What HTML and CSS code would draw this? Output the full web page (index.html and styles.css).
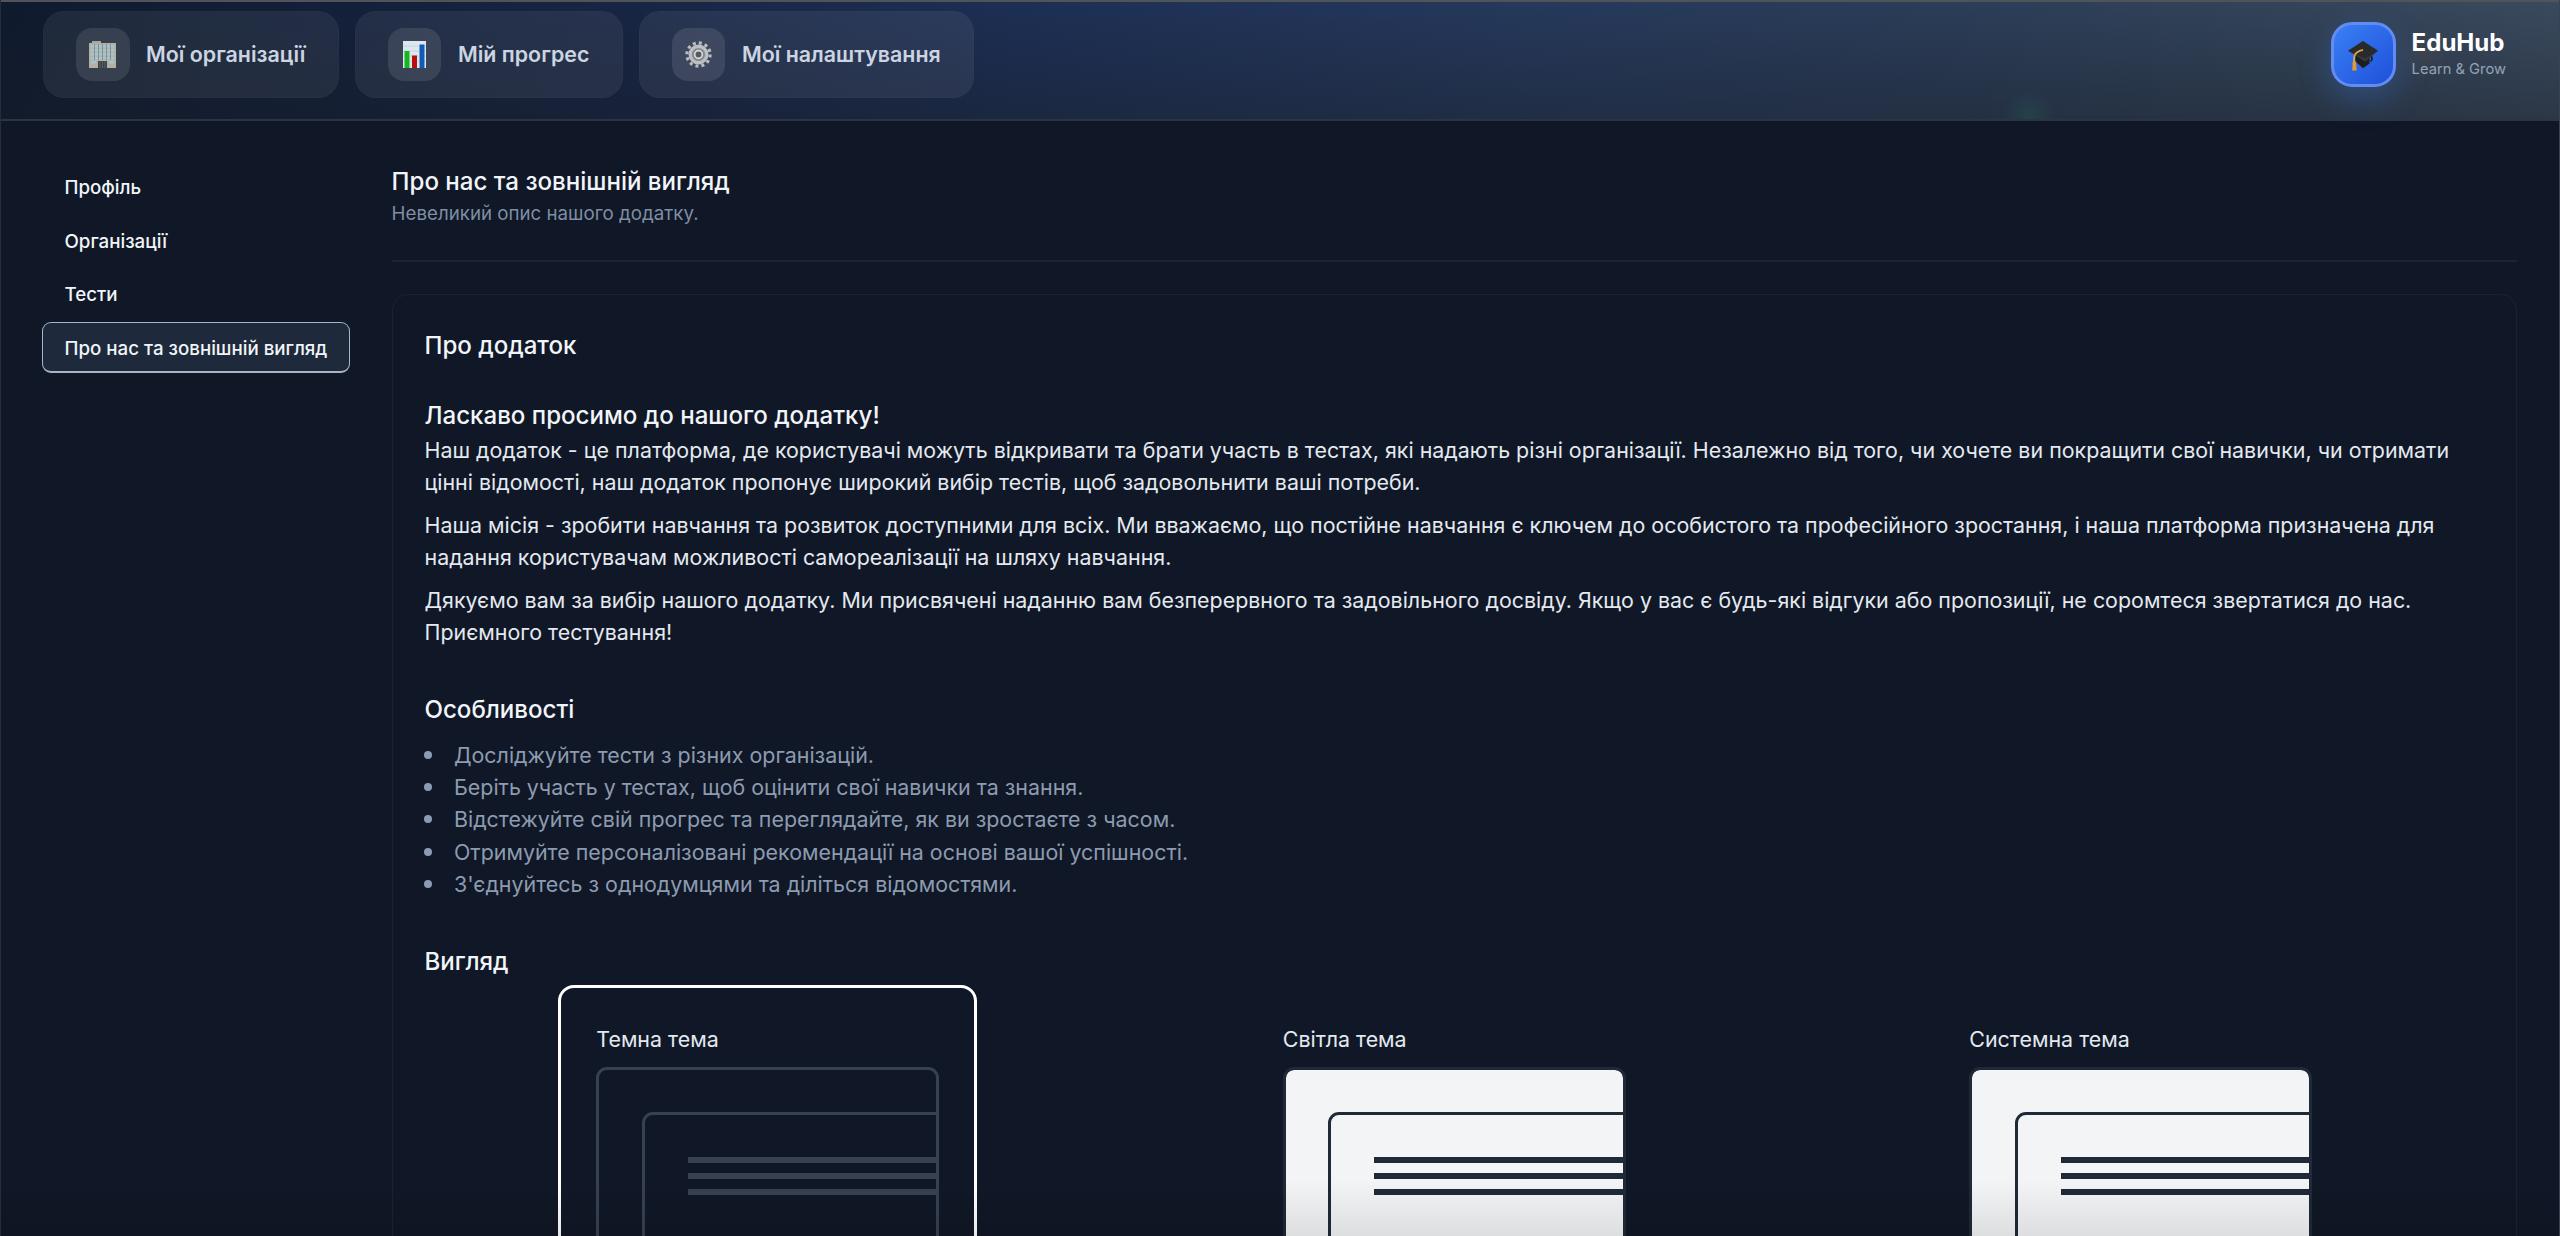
FILE: index.html
```html
<!DOCTYPE html>
<html lang="uk">
<head>
<meta charset="utf-8">
<title>EduHub</title>
<link rel="stylesheet" href="styles.css">
</head>
<body>
<div class="app">
  <header class="topbar">
    <nav class="nav">
      <a class="nav-item"><span class="nav-icon">
        <svg viewBox="0 0 27 27"><path d="M3 0h9v3H3z" fill="#aaa69f"/><path d="M0 2h27v25h-9v-7H9v7H0z" fill="#b5b0a6"/><g fill="#a3c6d2"><path d="M2 4h23v2.600H2zM2 8h23v2.600H2zM2 12h23v2.600H2zM2 16h23v2.600H2zM2 20h5v2.600H2zM20 20h5v2.600h-5z"/></g><path d="M5.500 3v16M9.500 3v16M13.500 3v16M17.500 3v16M21.500 3v16" stroke="#7d8b8e" stroke-width=".9"/><path d="M9 20h9v7H9z" fill="#39424a"/><path d="M11 20v7M13.500 20v7M16 20v7" stroke="#64716a" stroke-width=".7"/></svg>
      </span>Мої організації</a>
      <a class="nav-item"><span class="nav-icon">
        <svg viewBox="0 0 27 27"><path d="M2 0h23v27H2z" fill="#dde7f0"/><path d="M2 5h23M2 10h23M2 15h23M2 20h23" stroke="#c2d0dd" stroke-width=".8"/><path d="M3.500 10h5v17h-5z" fill="#12b81c"/><path d="M11 14.500h5V27h-5z" fill="#b90d10"/><path d="M18.500 3.500h5V27h-5z" fill="#0f5bb5"/></svg>
      </span>Мій прогрес</a>
      <a class="nav-item"><span class="nav-icon">
        <svg viewBox="0 0 27 27"><circle cx="13.500" cy="13.500" r="11.600" fill="none" stroke="#b9bdc1" stroke-width="3.200" stroke-dasharray="3 3.070"/><circle cx="13.500" cy="13.500" r="8.300" fill="#85888b" stroke="#bdc0c3" stroke-width="3.400"/><circle cx="13.500" cy="13.500" r="3.800" fill="#55595e" stroke="#d8dadc" stroke-width="1.700"/></svg>
      </span>Мої налаштування</a>
    </nav>
    <div class="brand">
      <div class="logo">
        <svg viewBox="0 0 34 34"><path d="M9 15v9l8 7 7-5v-9z" fill="#1d1e20"/><path d="M24 18c3 0 3.500 4 1 6" fill="none" stroke="#222" stroke-width="2"/><path d="M1 12.500 17 2l16 10.500L19.500 23z" fill="#292a2c"/><path d="M1 12.500 19.500 21 33 12.500 19.500 24z" fill="#3c3b3b"/><path d="M17 11.500c-5 1-9 4-9.500 8v5" fill="none" stroke="#dda245" stroke-width="2"/><path d="M6 24h3.600l.6 9.500H5.600z" fill="#e39a2d"/></svg>
      </div>
      <div class="brand-text"><span class="brand-name">EduHub</span><span class="brand-tag">Learn &amp; Grow</span></div>
    </div>
  </header>
  <div class="layout">
    <aside class="sidebar">
      <a class="side-item">Профіль</a>
      <a class="side-item">Організації</a>
      <a class="side-item">Тести</a>
      <a class="side-item active">Про нас та зовнішній вигляд</a>
    </aside>
    <main class="main">
      <h1 class="title">Про нас та зовнішній вигляд</h1>
      <p class="subtitle">Невеликий опис нашого додатку.</p>
      <hr class="divider">
      <section class="card">
        <h2 class="heading">Про додаток</h2>
        <h3 class="heading welcome">Ласкаво просимо до нашого додатку!</h3>
        <p class="text">Наш додаток - це платформа, де користувачі можуть відкривати та брати участь в тестах, які надають різні організації. Незалежно від того, чи хочете ви покращити свої навички, чи отримати цінні відомості, наш додаток пропонує широкий вибір тестів, щоб задовольнити ваші потреби.</p>
        <p class="text">Наша місія - зробити навчання та розвиток доступними для всіх. Ми вважаємо, що постійне навчання є ключем до особистого та професійного зростання, і наша платформа призначена для надання користувачам можливості самореалізації на шляху навчання.</p>
        <p class="text">Дякуємо вам за вибір нашого додатку. Ми присвячені наданню вам безперервного та задовільного досвіду. Якщо у вас є будь-які відгуки або пропозиції, не соромтеся звертатися до нас. Приємного тестування!</p>
        <h3 class="heading section">Особливості</h3>
        <ul class="features">
          <li>Досліджуйте тести з різних організацій.</li>
          <li>Беріть участь у тестах, щоб оцінити свої навички та знання.</li>
          <li>Відстежуйте свій прогрес та переглядайте, як ви зростаєте з часом.</li>
          <li>Отримуйте персоналізовані рекомендації на основі вашої успішності.</li>
          <li>З'єднуйтесь з однодумцями та діліться відомостями.</li>
        </ul>
        <h3 class="heading section">Вигляд</h3>
        <div class="themes">
          <div class="theme dark selected"><span class="theme-name">Темна тема</span><div class="preview"><div class="window"><i></i><i></i><i></i></div></div></div>
          <div class="theme light"><span class="theme-name">Світла тема</span><div class="preview"><div class="window"><i></i><i></i><i></i></div></div></div>
          <div class="theme light"><span class="theme-name">Системна тема</span><div class="preview"><div class="window"><i></i><i></i><i></i></div></div></div>
        </div>
      </section>
    </main>
  </div>
  <div class="fade"></div>
</div>
</body>
</html>
```
FILE: styles.css
```css
* { box-sizing: border-box; margin: 0; padding: 0; }
body { background: #101726; }
.app {
  position: relative;
  height: 1236px;
  overflow: hidden;
  background: #101726;
  color: #f1f5f9;
  font: 400 21.410px/32.150px Inter, "Noto Sans", sans-serif;
  border-left: 1px solid #252d3b;
  border-right: 1px solid #394252;
}
.topbar {
  height: 121px;
  padding: 9px 53px 0 42px;
  display: flex;
  justify-content: space-between;
  align-items: flex-start;
  border-top: 2px solid #505459;
  border-bottom: 2px solid #2b3442;
  background:
    radial-gradient(circle at 2028px 115px, rgba(34, 120, 90, .24), transparent 26px),
    radial-gradient(circle at 2422px 52px, rgba(110, 80, 60, .22), transparent 26px),
    linear-gradient(180deg, rgba(24, 29, 38, 0) 0%, rgba(24, 29, 38, .42) 100%),
    linear-gradient(90deg, #0f1a2e 0%, #172544 24%, #1d2f55 40%, #26395c 60%, #2b3d58 76%, #324359 88%, #3a4a5e 100%);
}
.nav { display: flex; gap: 16px; }
.nav-item {
  height: 87px;
  padding: 0 32.500px 0 32px;
  display: flex;
  align-items: center;
  gap: 16.500px;
  border: 1px solid rgba(255, 255, 255, .02);
  border-radius: 21px;
  background: rgba(255, 255, 255, .065);
  color: #cbd5e1;
  font-weight: 600;
}
.nav-icon {
  width: 53.500px;
  height: 53.500px;
  display: grid;
  place-items: center;
  border-radius: 16px;
  background: rgba(255, 255, 255, .1);
}
.nav-icon svg { width: 27px; height: 27px; }
.brand { display: flex; gap: 16px; padding-top: 11px; }
.logo {
  width: 65px;
  height: 65px;
  display: grid;
  place-items: center;
  border: 3px solid #628cf2;
  border-radius: 21px;
  background: linear-gradient(135deg, #3b82f6, #1d4ed8) border-box;
  box-shadow: 0 11px 32px rgba(59, 130, 246, .3);
}
.logo svg { width: 32px; height: 32px; }
.brand-text { display: flex; flex-direction: column; padding-top: 6px; }
.brand-name { font-size: 24.080px; line-height: 30px; font-weight: 700; color: #fff; }
.brand-tag { font-size: 14.720px; line-height: 22px; color: #94a3b8; }
.layout { display: flex; padding: 40px 42px 0 41px; }
.sidebar {
  width: 308px;
  margin-right: 41.600px;
  display: flex;
  flex-direction: column;
  gap: 2.700px;
  flex: none;
}
.side-item {
  height: 51px;
  padding: 1px 21.500px 0;
  border: 1.500px solid transparent;
  border-bottom-width: 2px;
  border-radius: 9px;
  font-size: 18.730px;
  line-height: 49px;
  font-weight: 500;
  white-space: nowrap;
}
.side-item.active { background: #1e293b; border-color: #a9b4c4; }
.main { flex: 1; min-width: 0; padding-top: 4px; }
.title, .heading { font-size: 24.080px; line-height: 37.600px; font-weight: 500; }
.title { line-height: 34px; }
.subtitle { font-size: 18.730px; line-height: 30px; color: #7f8ea3; }
.divider { height: 2px; border: 0; margin: 31px 0 32px; background: #1d2534; }
.card {
  height: 1010px;
  padding: 32px 31.900px;
  border: 1px solid #1b2332;
  border-radius: 16px;
}
.welcome { margin-top: 32px; }
.text { color: #e4e9f0; margin-bottom: 10.700px; }
.section { margin-top: 32px; }
.text + .section { margin-top: 42px; }
.features { list-style: none; margin-top: 11px; color: #8d9bb0; }
.features li { display: flex; align-items: center; gap: 21.500px; }
.features li::before {
  content: "";
  width: 8px;
  height: 8px;
  border-radius: 50%;
  background: currentColor;
}
.features + .section { margin-top: 43px; }
.themes { display: grid; grid-template-columns: repeat(3, 1fr); justify-items: center; margin-top: 5px; }
.theme {
  width: 419px;
  height: 440px;
  padding: 35px;
  border: 3px solid transparent;
  border-radius: 16px;
}
.theme.selected { border-color: #fff; }
.theme-name { display: block; color: #e4e9f0; margin-bottom: 11px; }
.preview {
  height: 320px;
  padding: 42.500px 0 0 42.500px;
  overflow: hidden;
  border: 3px solid #374151;
  border-radius: 11px;
}
.window {
  width: 380px;
  height: 300px;
  padding: 42px 0 0 43px;
  border: 3px solid #374151;
  border-radius: 11px;
}
.window i { display: block; height: 6px; margin-bottom: 10px; background: #374151; }
.light .preview { background: #f3f4f6; background-clip: padding-box; border-color: #1f2937; }
.light .window { border-color: #1f2937; }
.light i { background: #1f2937; }
.fade {
  position: absolute;
  inset: auto 0 0 0;
  height: 56px;
  background: linear-gradient(transparent, rgba(0, 0, 0, .09));
}
```
